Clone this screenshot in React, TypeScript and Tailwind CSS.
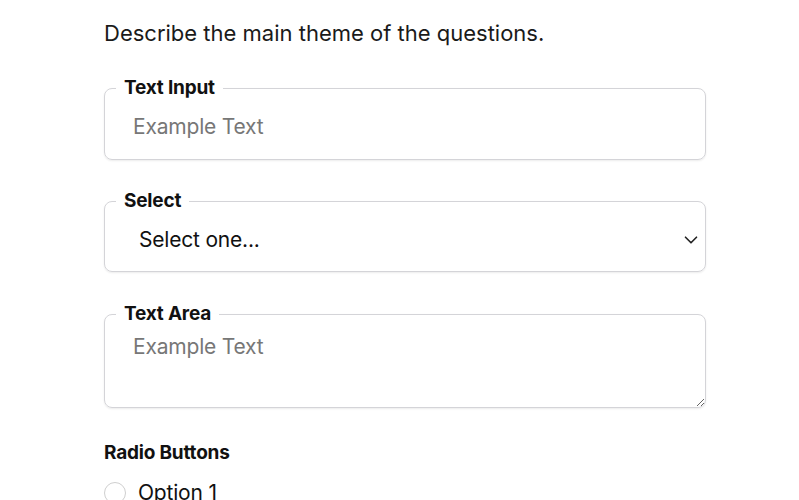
import { ChevronDown } from "lucide-react";

const font = { fontFamily: "Inter, 'Noto Sans', sans-serif" };

function Field({ label, children }: { label: string; children: React.ReactNode }) {
  return (
    <fieldset className="m-0 min-w-0 rounded-lg border border-[#d4d4d8] p-0 shadow-[0_1px_2px_rgba(0,0,0,0.08)]">
      <legend className="ml-[11px] px-[8px] text-[19px] font-bold leading-[24px] tracking-[-0.2px] text-[#111]">{label}</legend>
      {children}
    </fieldset>
  );
}

export default function App() {
  return (
    <div className="min-h-screen bg-white text-[#1f2937]" style={font}>
      <div className="ml-[104px] w-[602px] pt-[19px]">
        <p className="text-[22px] leading-[28px] text-[#1a1a1a]">Describe the main theme of the questions.</p>

        <div className="mt-[29px] flex flex-col">
          <Field label="Text Input">
            <input
              className="mb-[7px] block h-[52px] w-full bg-transparent px-[28px] text-[21px] tracking-[-0.2px] text-[#222] outline-none placeholder:text-[#777]"
              placeholder="Example Text"
            />
          </Field>

          <div className="mt-[29px]">
            <Field label="Select">
              <div className="relative mb-[4px]">
                <select className="block h-[54px] w-full appearance-none bg-transparent pl-[34px] text-[21px] tracking-[-0.2px] text-[#111] outline-none">
                  <option>Select one...</option>
                  <option>Option A</option>
                  <option>Option B</option>
                </select>
                <ChevronDown className="pointer-events-none absolute right-[3px] top-[16px] h-[22px] w-[22px] text-[#222]" strokeWidth={1.8} />
              </div>
            </Field>
          </div>

          <div className="mt-[30px]">
            <Field label="Text Area">
              <textarea
                className="block h-[81px] w-full resize-y bg-transparent px-[28px] pt-[7px] text-[21px] leading-[28px] tracking-[-0.2px] text-[#222] outline-none placeholder:text-[#777]"
                placeholder="Example Text"
              />
            </Field>
          </div>
        </div>

        <p className="mt-[33px] text-[19px] font-bold leading-[24px] tracking-[-0.2px] text-[#111]">Radio Buttons</p>
        <label className="mt-[15px] flex items-center gap-[12px]">
          <span className="h-[22px] w-[22px] rounded-full border border-[#cfcfcf] bg-white" />
          <span className="text-[21px] leading-[26px] tracking-[-0.2px] text-[#111]">Option 1</span>
        </label>
      </div>
    </div>
  );
}
